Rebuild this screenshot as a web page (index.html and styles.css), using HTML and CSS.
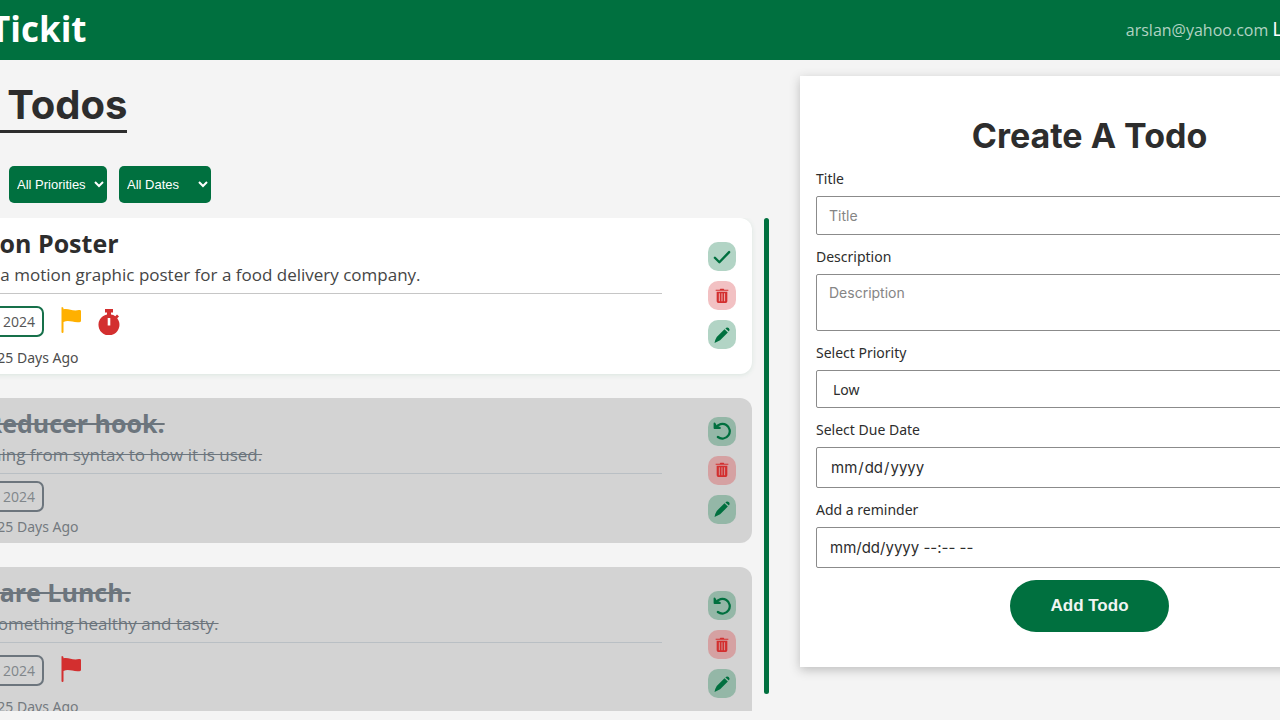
FILE: index.html
```html
<!DOCTYPE html>
<html lang="en">
<head>
<meta charset="utf-8">
<title>Tickit</title>
<link rel="stylesheet" href="styles.css">
</head>
<body>
<svg class="sprite" aria-hidden="true">
  <symbol id="check" viewBox="0 0 24 24"><path d="M2.500 13l6 6L21.500 5.500" fill="none" stroke="currentColor" stroke-width="3.200" stroke-linecap="round" stroke-linejoin="round"/></symbol>
  <symbol id="trash" viewBox="0 0 24 24"><path fill="currentColor" fill-rule="evenodd" d="M2.500 4V2.500h6L9.500 1h5l1 1.500h6V4zM4 5.500h16V20q0 2.500-2.500 2.500h-11Q4 22.500 4 20zM7.300 8v12h1.300V8zm4 0v12h1.300V8zm4 0v12h1.300V8z"/></symbol>
  <symbol id="pencil" viewBox="0 0 24 24"><path fill="currentColor" d="M15.300 4.300l4.500 4.500L9.500 19Q5 21.500 2 22.500 2.500 18.500 5 14.500zM16.500 3.200q2.300-2.200 4.500-.4 2.200 2.200.2 4.600z"/></symbol>
  <symbol id="undo" viewBox="0 0 24 24"><path fill="none" stroke="currentColor" stroke-width="3" stroke-linecap="round" stroke-linejoin="round" d="M4 7.500A9.800 9.800 0 1 1 6.500 20"/><path fill="currentColor" d="M.800 1.500q0-1 1-1t1.300.8L5 4.500l4 1.800q1.500.4 1.500 1.600t-1.500 1.300H2Q.800 9.200.800 8z"/></symbol>
  <symbol id="flag" viewBox="0 0 20 26"><path fill="currentColor" d="M1 0q1.500 0 1.500 1.500v.7C8 1 11 4.500 18 3q2-.3 2 1v10q0 1-1.500 1.200C12 16 8 12.500 2.500 15v10q0 1-1 1t-1-1V1Q.500 0 1 0z"/></symbol>
  <symbol id="timer" viewBox="0 0 22 26"><path fill="currentColor" fill-rule="evenodd" d="M7 0h8v3.500h-2v2q2.500.4 4.300 1.700L19 5.500l2 2-1.800 1.800A10.500 10.500 0 1 1 9 5.500v-2H7zM9.700 9v7.500h2.600V9z"/></symbol>
</svg>
<div class="shell">
  <header class="topbar">
    <a class="brand" href="#">Tickit</a>
    <nav class="account"><span class="email">arslan@yahoo.com</span><a class="logout" href="#">Logout</a></nav>
  </header>
  <main class="content">
    <section class="todos">
      <h1 class="page-title">My Todos</h1>
      <div class="filters">
        <select class="filter filter-status" aria-label="Status"><option>All</option></select>
        <select class="filter filter-priority" aria-label="Priority"><option>All Priorities</option></select>
        <select class="filter filter-date" aria-label="Dates"><option>All Dates</option></select>
      </div>
      <div class="list-row">
        <div class="list">
          <article class="card">
            <div class="details">
              <div class="text"><h2 class="name">Motion Poster</h2><p class="note">Design a motion graphic poster for a food delivery company.</p></div>
              <div class="meta has-flag"><span class="date">Aug 06, 2024</span><svg class="flag amber"><use href="#flag"/></svg><svg class="timer"><use href="#timer"/></svg></div>
              <p class="age">Created 25 Days Ago</p>
            </div>
            <div class="actions">
              <button class="action" aria-label="Complete"><svg><use href="#check"/></svg></button>
              <button class="action remove" aria-label="Delete"><svg><use href="#trash"/></svg></button>
              <button class="action" aria-label="Edit"><svg><use href="#pencil"/></svg></button>
            </div>
          </article>
          <article class="card done">
            <div class="details">
              <div class="text"><h2 class="name">useReducer hook.</h2><p class="note">Everything from syntax to how it is used.</p></div>
              <div class="meta"><span class="date">Aug 06, 2024</span></div>
              <p class="age">Created 25 Days Ago</p>
            </div>
            <div class="actions">
              <button class="action" aria-label="Undo"><svg><use href="#undo"/></svg></button>
              <button class="action remove" aria-label="Delete"><svg><use href="#trash"/></svg></button>
              <button class="action" aria-label="Edit"><svg><use href="#pencil"/></svg></button>
            </div>
          </article>
          <article class="card done">
            <div class="details">
              <div class="text"><h2 class="name">Prepare Lunch.</h2><p class="note">Make something healthy and tasty.</p></div>
              <div class="meta has-flag"><span class="date">Aug 06, 2024</span><svg class="flag red"><use href="#flag"/></svg></div>
              <p class="age">Created 25 Days Ago</p>
            </div>
            <div class="actions">
              <button class="action" aria-label="Undo"><svg><use href="#undo"/></svg></button>
              <button class="action remove" aria-label="Delete"><svg><use href="#trash"/></svg></button>
              <button class="action" aria-label="Edit"><svg><use href="#pencil"/></svg></button>
            </div>
          </article>
        </div>
        <div class="scroll-thumb"></div>
      </div>
    </section>
    <form class="create">
      <h2 class="form-title">Create A Todo</h2>
      <label for="title">Title</label>
      <input class="field" id="title" type="text" placeholder="Title">
      <label for="description">Description</label>
      <textarea class="field area" id="description" placeholder="Description"></textarea>
      <label for="priority">Select Priority</label>
      <select class="field choice" id="priority"><option>Low</option><option>Medium</option><option>High</option></select>
      <label for="due">Select Due Date</label>
      <input class="field when" id="due" type="date">
      <label for="reminder">Add a reminder</label>
      <input class="field when" id="reminder" type="text" placeholder="mm/dd/yyyy --:-- --">
      <button class="submit" type="button">Add Todo</button>
    </form>
  </main>
</div>
</body>
</html>
```

FILE: styles.css
```css
* { box-sizing: border-box; }
body {
  margin: 0;
  height: 100vh;
  overflow: hidden;
  background: #f4f4f4;
  color: #2d2d2d;
  font-family: "Open Sans", "Noto Sans", sans-serif;
}
h1, h2, p { margin: 0; }
.sprite { display: none; }
.shell { margin: 0 -99px 0 -74px; }
.topbar {
  display: flex;
  align-items: center;
  justify-content: space-between;
  height: 60px;
  padding: 0 42px 3px 64px;
  background: #00703f;
}
.brand {
  color: #fff;
  font-size: 35px;
  font-weight: 700;
  line-height: 48px;
  text-decoration: none;
}
.account { display: flex; align-items: baseline; gap: 4px; }
.email { color: #b0d3c2; font-size: 16px; }
.logout { color: #fff; font-size: 20px; line-height: 26px; text-decoration: none; }
.content {
  display: grid;
  grid-template-columns: 843fr 579fr;
  gap: 31px;
  align-items: start;
  padding-top: 16px;
}
.todos { min-width: 0; }
.page-title {
  width: fit-content;
  padding: 3px 0 0 10px;
  border-bottom: 3px solid #2d2d2d;
  margin-bottom: 33px;
  font: 700 40px/51px Inter, sans-serif;
}
.filters { display: flex; gap: 12px; margin-bottom: 15px; }
.filter {
  height: 37px;
  padding: 0 4px;
  border: 0;
  border-radius: 5px;
  background: #00703f;
  color: #fff;
  font: 13px "Liberation Sans", sans-serif;
}
.filter-status { width: 71px; }
.filter-priority { width: 98px; }
.filter-date { width: 92px; }
.list-row { display: flex; }
.list {
  display: flex;
  flex: 1;
  flex-direction: column;
  gap: 24px;
  height: calc(100vh - 227px);
  margin-left: -8px;
  padding: 0 12px 0 8px;
  overflow: hidden;
}
.scroll-thumb {
  width: 5px;
  margin-bottom: 17px;
  border-radius: 3px;
  background: #00703f;
}
.card {
  display: flex;
  flex: none;
  align-items: center;
  gap: 46px;
  padding: 7px 16px 8px 16px;
  border-radius: 12px;
  background: #fff;
  box-shadow: 0 1px 5px #d9e5df;
}
.details { flex: 1; align-self: stretch; }
.text { padding-bottom: 5px; border-bottom: 1px solid #c6c6c6; }
.name { font-size: 25px; line-height: 37px; }
.note { color: #454545; font-size: 17px; line-height: 26px; }
.meta { display: flex; align-items: center; gap: 17px; height: 44px; }
.meta.has-flag { height: 55px; }
.date {
  padding: 3px 7px;
  border: 2px solid #16704a;
  border-radius: 7px;
  color: #555;
  font-size: 14px;
  line-height: 21px;
}
.flag { width: 20px; height: 26px; margin-top: -4px; }
.amber { color: #ffb000; }
.red { color: #d32f2f; }
.timer { width: 22px; height: 26px; color: #d32f2f; }
.age { color: #4d4d4d; font: 14px/17px "Noto Sans", sans-serif; }
.actions { display: flex; flex-direction: column; gap: 10px; }
.action {
  display: grid;
  place-items: center;
  width: 28px;
  height: 29px;
  padding: 0;
  border: 0;
  border-radius: 10px;
  background: #b2d4c5;
  color: #00703f;
}
.action svg { width: 18px; height: 18px; }
.remove { background: #f2c1c3; color: #d32f2f; }
.remove svg { width: 16px; height: 16px; }
.done { background: #d3d3d3; box-shadow: none; }
.done .name, .done .note { color: #6c757d; text-decoration: line-through; }
.done .text { border-color: #b9bfc4; }
.done .date { color: #80868a; border-color: #6c757d; }
.done .age { color: #747a7f; }
.done .action { background: #94b7a7; }
.done .remove { background: #d5a1a2; }
.create {
  display: flex;
  flex-direction: column;
  padding: 36px 16px 35px;
  background: #fff;
  box-shadow: 0 3px 10px #bdbdbd;
}
.form-title {
  margin-bottom: 9px;
  text-align: center;
  font: 700 34px/48px Inter, sans-serif;
}
.create label { margin-bottom: 7px; font: 14px/20px "Noto Sans", sans-serif; }
.field {
  width: 100%;
  height: 39px;
  margin: 0 0 12px;
  padding: 8px 12px;
  border: 1px solid #8b8b8b;
  border-radius: 2px;
  background: #fff;
  color: #2d2d2d;
  font: 14px/20px Inter, sans-serif;
}
.field::placeholder { color: #858585; }
.area { height: 57px; resize: none; }
.choice { height: 38px; font-family: "Noto Sans", sans-serif; }
.when { height: 41px; padding: 8px 13px; font-size: 15px; }
.when::placeholder { color: #2d2d2d; }
.submit {
  align-self: center;
  width: 159px;
  height: 52px;
  border: 0;
  border-radius: 26px;
  background: #00703f;
  color: #f0f5f2;
  font: 700 17px "Liberation Sans", sans-serif;
}
```
